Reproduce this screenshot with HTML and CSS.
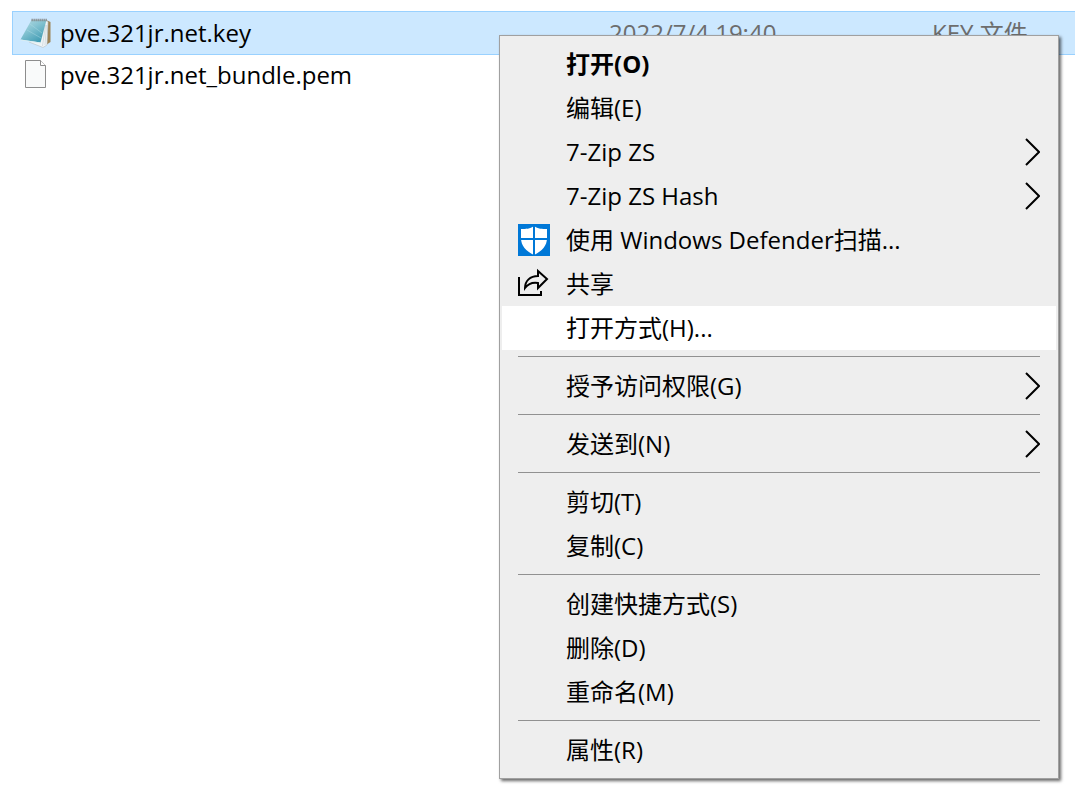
FILE: index.html
```html
<!DOCTYPE html>
<html lang="zh-CN">
<head>
    <meta charset="UTF-8">
    <meta name="viewport" content="width=device-width, initial-scale=1.0">
    <title>pve.321jr.net.key</title>
    <link rel="stylesheet" href="styles.css">
</head>
<body>

<table class="file-list">
    <tbody>
        <tr class="file selected">
            <td class="name">
                <div class="file-name">
                    <svg class="file-icon" viewBox="0 0 32 32" aria-hidden="true">
                        <defs>
                            <linearGradient id="cover" x1="0" y1="0" x2="0.7" y2="1">
                                <stop offset="0" stop-color="#b9dde4"/>
                                <stop offset="0.45" stop-color="#86c4d2"/>
                                <stop offset="1" stop-color="#3f9bb3"/>
                            </linearGradient>
                        </defs>
                        <path d="M26 3l4.500 2v20L26 28z" fill="#9c8458"/>
                        <path d="M26 3l2 2-1 23-4 2.500L9 25z" fill="#eff4f6" stroke="#b5bfc4" stroke-width="0.6"/>
                        <path d="M25.500 8l-3 21M26.500 8L25 28" stroke="#c3ced4" stroke-width="0.6" fill="none"/>
                        <path d="M11.500 3H26.500L20.500 25.500 0.500 22.500z" fill="url(#cover)"/>
                        <path d="M0.500 22.500l20 3v1L1 23.500z" fill="#d9edf2"/>
                        <path d="M10 7l12 9M7 13l14 8" stroke="#b4e0e8" stroke-width="0.7" opacity="0.6"/>
                        <path d="M11.500 3h15.500" stroke="#85898b" stroke-width="2.400" stroke-dasharray="1.300 0.700"/>
                    </svg>
                    <span>pve.321jr.net.key</span>
                </div>
            </td>
            <td class="date">2022/7/4 19:40</td>
            <td class="type">KEY 文件</td>
        </tr>
        <tr class="file">
            <td class="name">
                <div class="file-name">
                    <svg class="file-icon" viewBox="0 0 32 32" aria-hidden="true">
                        <path d="M5.5 1.5h15l5 5v22h-20z" fill="#f9fafa" stroke="#8d8d8d"/>
                        <path d="M20.5 1.5v5h5" fill="#fff" stroke="#8d8d8d"/>
                    </svg>
                    <span>pve.321jr.net_bundle.pem</span>
                </div>
            </td>
            <td></td>
            <td></td>
        </tr>
    </tbody>
</table>

<div class="context-menu" role="menu">
    <button class="item default" role="menuitem">打开(O)</button>
    <button class="item" role="menuitem">编辑(E)</button>
    <button class="item" role="menuitem">7-Zip ZS
        <svg class="arrow" viewBox="0 0 16 28" aria-hidden="true"><path d="M2 1l13 13L2 27"/></svg>
    </button>
    <button class="item" role="menuitem">7-Zip ZS Hash
        <svg class="arrow" viewBox="0 0 16 28" aria-hidden="true"><path d="M2 1l13 13L2 27"/></svg>
    </button>
    <button class="item with-icon" role="menuitem">
        <svg class="icon" viewBox="0 0 32 32" aria-hidden="true">
            <path d="M0 0h32v32H0z" fill="#0078d7"/>
            <path d="M16 2c4 3 8 3 13 3v9c0 8-5 13-13 17C8 27 3 22 3 14V5c5 0 9 0 13-3z" fill="#fff"/>
            <path d="M16 1v30M2 15h28" stroke="#0078d7" stroke-width="2"/>
        </svg>
        使用 Windows Defender扫描...
    </button>
    <button class="item with-icon" role="menuitem">
        <svg class="icon" viewBox="0 0 32 32" aria-hidden="true">
            <path d="M1 9v18h22v-4" fill="none" stroke="#000" stroke-width="2"/>
            <path d="M20 3l9 8-9 9v-5c-6-1-10 1-13 5 0-7 5-12 13-12z" fill="none" stroke="#000" stroke-width="2"/>
        </svg>
        共享
    </button>
    <button class="item active" role="menuitem">打开方式(H)...</button>
    <hr>
    <button class="item" role="menuitem">授予访问权限(G)
        <svg class="arrow" viewBox="0 0 16 28" aria-hidden="true"><path d="M2 1l13 13L2 27"/></svg>
    </button>
    <hr>
    <button class="item" role="menuitem">发送到(N)
        <svg class="arrow" viewBox="0 0 16 28" aria-hidden="true"><path d="M2 1l13 13L2 27"/></svg>
    </button>
    <hr>
    <button class="item" role="menuitem">剪切(T)</button>
    <button class="item" role="menuitem">复制(C)</button>
    <hr>
    <button class="item" role="menuitem">创建快捷方式(S)</button>
    <button class="item" role="menuitem">删除(D)</button>
    <button class="item" role="menuitem">重命名(M)</button>
    <hr>
    <button class="item" role="menuitem">属性(R)</button>
</div>

</body>
</html>
```
FILE: styles.css
```css
* {
    margin: 0;
    padding: 0;
    box-sizing: border-box;
}

body {
    font-family: "Open Sans", "Noto Sans CJK SC", sans-serif;
    font-size: 24px;
    line-height: 32px;
    color: #000;
    background-color: #fff;
    padding: 11px 0 0 12px;
    overflow: hidden;
}

/* File list */
.file-list {
    width: 100%;
    table-layout: fixed;
    border-spacing: 0;
}

.file td {
    height: 40px;
    white-space: nowrap;
}

.file.selected td {
    height: 44px;
    background-color: #cce8ff;
    border-top: 1px solid #99d1ff;
    border-bottom: 1px solid #99d1ff;
}

.file .name {
    border-left: 1px solid transparent;
}

.file.selected .name {
    border-left-color: #99d1ff;
}

.name {
    width: 597px;
}

.date {
    width: 323px;
}

.date,
.type {
    color: #6d6d6d;
}

.file-name {
    display: flex;
    align-items: center;
    gap: 8px;
    padding-left: 7px;
}

.file-icon {
    width: 32px;
    height: 32px;
    flex-shrink: 0;
}

/* Context menu */
.context-menu {
    position: absolute;
    top: 35px;
    left: 499px;
    min-width: 560px;
    padding: 6px 2px;
    background-color: #eee;
    border: 1px solid #a0a0a0;
    box-shadow: 2px 2px 3px rgba(0, 0, 0, 0.6);
}

.item {
    display: flex;
    align-items: center;
    justify-content: space-between;
    width: 100%;
    height: 44px;
    padding: 0 16px 0 64px;
    border: none;
    background: none;
    color: inherit;
    font: inherit;
    text-align: left;
    white-space: nowrap;
}

.item.default {
    font-weight: bold;
}

.item.active,
.item:hover {
    background-color: #fff;
}

.item.with-icon {
    justify-content: flex-start;
    gap: 16px;
    padding-left: 16px;
}

.icon {
    width: 32px;
    height: 32px;
}

.arrow {
    width: 16px;
    height: 28px;
    fill: none;
    stroke: #000;
    stroke-width: 2;
}

.context-menu hr {
    height: 1px;
    margin: 6px 16px 7px;
    border: none;
    background-color: #919191;
}
```
